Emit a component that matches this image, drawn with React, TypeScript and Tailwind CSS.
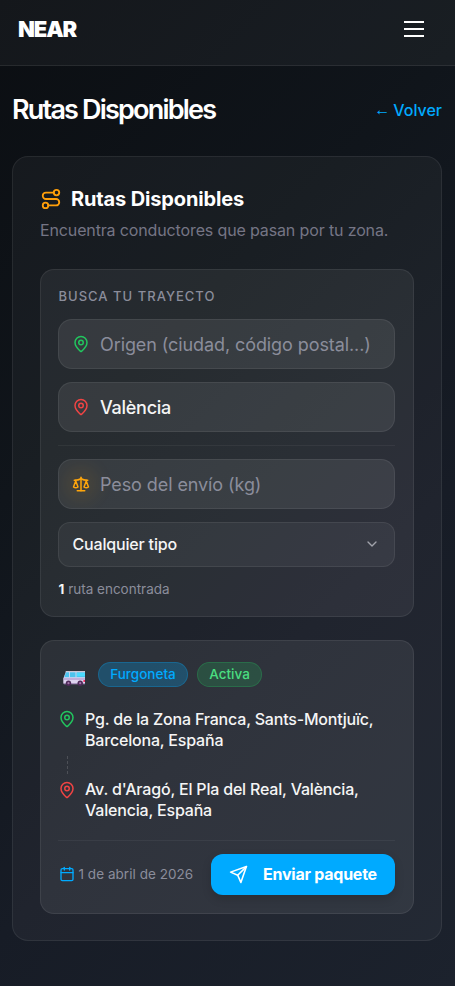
import React from 'react';
import { Calendar, ChevronDown, MapPin, Route, Scale } from 'lucide-react';

function SendIcon({ className }: { className?: string }) {
  return (
    <svg viewBox="0 0 24 24" fill="none" stroke="currentColor" strokeWidth="2" strokeLinecap="round" strokeLinejoin="round" className={className}>
      <path d="m22 2-7 20-4-9-9-4Z" />
      <path d="M22 2 11 13" />
    </svg>
  );
}

function VanIcon() {
  return (
    <svg viewBox="0 0 22 15" className="h-[15px] w-[22px]">
      <path d="M3 0.5h19v12.5H1.2L0.3 12V7.5z" fill="#ddd4ef" />
      <path d="M3.2 1h18.8v5.2H1.2z" fill="#4cc3ee" />
      <path d="M6 1h1v5.2H6zM12.5 1h1v5.2h-1z" fill="#c5d5ef" />
      <path d="M2.8 0.2H22v1.1H2.4z" fill="#e2dcee" />
      <path d="M14 2h8v3.2h-8z" fill="#49dcff" />
      <path d="M0.7 7.4H22v1H0.5z" fill="#a585c6" />
      <path d="M20.4 9H22v2h-1.6z" fill="#f02c62" />
      <path d="M0.3 12h21.7v1.2H1z" fill="#a992be" />
      <circle cx="5.5" cy="12.2" r="2.7" fill="#4e2a59" />
      <circle cx="17.2" cy="12.2" r="2.7" fill="#4e2a59" />
      <circle cx="5.5" cy="12.2" r="1.1" fill="#a477a9" />
      <circle cx="17.2" cy="12.2" r="1.1" fill="#a477a9" />
    </svg>
  );
}

interface FieldProps {
  icon: React.ReactNode;
  placeholder: string;
  value?: string;
}

function Field({ icon, placeholder, value }: FieldProps) {
  return (
    <label className="flex h-[50px] items-center gap-[10px] overflow-hidden rounded-[14px] border border-white/[0.07] bg-white/[0.08] px-[13px]">
      {icon}
      <input
        className="w-full min-w-0 bg-transparent text-[18px] font-medium tracking-[-0.014em] text-[#f5f5f5] outline-none placeholder:font-normal placeholder:tracking-[-0.005em] placeholder:text-[#8b8d9b]"
        placeholder={placeholder}
        defaultValue={value}
      />
    </label>
  );
}

function SearchPanel() {
  return (
    <div className="h-[348px] rounded-[14px] border border-white/[0.07] bg-white/[0.06] pt-[17px] pr-[18px] pl-[17px]">
      <h3 className="pl-[0.5px] text-[13px] leading-[18px] font-medium tracking-[0.078em] text-[#8b8d9b]">BUSCA TU TRAYECTO</h3>
      <div className="mt-[14px] flex flex-col gap-[13px]">
        <Field icon={<MapPin className="size-[18px] shrink-0 text-[#22c55e]" />} placeholder="Origen (ciudad, código postal...)" />
        <Field icon={<MapPin className="size-[18px] shrink-0 text-[#ef4444]" />} placeholder="Destino" value="València" />
        <div className="border-t border-white/[0.05]" />
        <Field
          icon={
            <span className="flex size-[18px] shrink-0 rounded-full bg-[#ffa60b]/5 shadow-[0_0_18px_8px_rgba(255,166,11,0.09)]">
              <Scale className="size-[18px] text-[#ffa60b]" />
            </span>
          }
          placeholder="Peso del envío (kg)"
        />
        <button className="flex h-[45px] items-center justify-between rounded-xl border border-white/[0.07] bg-white/[0.05] pr-[13px] pb-[1px] pl-[13.5px] text-left text-[16px] font-medium tracking-[-0.011em] text-[#f5f5f5]">
          Cualquier tipo
          <ChevronDown className="mr-[1px] size-4 text-[#a1a3ab]" />
        </button>
      </div>
      <p className="mt-[12px] pl-[0.5px] text-[13.5px] leading-[20px] text-[#8b8d9b]">
        <strong className="font-bold text-[#f5f5f5]">1</strong> ruta encontrada
      </p>
    </div>
  );
}

function RouteCard() {
  return (
    <div className="mt-[23px] h-[274px] rounded-[14px] border border-white/[0.07] bg-white/[0.07] pt-[21px] pr-[18px] pl-[17px]">
      <div className="flex items-center">
        <span className="mt-[7px] ml-[4.5px]">
          <VanIcon />
        </span>
        <span className="ml-[13.5px] flex h-[25px] w-[90px] items-center justify-center rounded-full border border-[#00aaff]/25 bg-[#00aaff]/25 text-[13.5px] font-medium text-[#00aaff]">
          Furgoneta
        </span>
        <span className="ml-[9px] flex h-[25px] w-[65px] items-center justify-center rounded-full border border-[#22c55e]/25 bg-[#22c55e]/20 text-[13.5px] font-medium text-[#4ade80]">
          Activa
        </span>
      </div>

      <div className="mt-[22px] flex gap-[9px] text-[16px] leading-[21px] font-medium tracking-[-0.012em] text-[#f5f5f5]">
        <MapPin className="mt-[1px] size-[18px] shrink-0 text-[#22c55e]" />
        <p>
          Pg. de la Zona Franca, Sants-Montjuïc,
          <br />
          Barcelona, España
        </p>
      </div>
      <div className="mt-[5px] ml-[9px] h-[18px] border-l border-dashed border-white/15" />
      <div className="mt-[5px] flex gap-[9px] text-[16px] leading-[21px] font-medium tracking-[-0.012em] text-[#f5f5f5]">
        <MapPin className="mt-[2px] size-[18px] shrink-0 text-[#ef4444]" />
        <p>
          Av. d'Aragó, El Pla del Real, València,
          <br />
          Valencia, España
        </p>
      </div>

      <div className="mt-[19px] flex items-center justify-between border-t border-white/[0.05] pt-[13px]">
        <span className="flex items-center gap-[4px] pb-[1px] pl-[0.5px] text-[13.5px] tracking-[0.003em] text-[#8b8d9b]">
          <Calendar className="size-4 text-[#00aaff]" />
          1 de abril de 2026
        </span>
        <button className="flex h-[41px] w-[184px] items-center gap-[15px] rounded-xl bg-[#00aaff] pb-[1px] pl-[18px] text-[16px] font-bold tracking-[-0.015em] text-white shadow-[0_4px_10px_rgba(0,0,0,0.15)]">
          <SendIcon className="size-[19px]" />
          Enviar paquete
        </button>
      </div>
    </div>
  );
}

export default function App() {
  return (
    <div className="h-[986px] overflow-hidden bg-[linear-gradient(135deg,#0b0e12_0%,#10151b_35%,#171c26_65%,#1c222d_100%)] font-['Inter',sans-serif] text-white">
      <header className="flex h-[66px] items-center justify-between border-b border-white/[0.08] bg-white/[0.04] pr-[31px] pb-[7px] pl-[18px]">
        <span className="text-[22px] font-black tracking-[-0.05em]">NEAR</span>
        <button aria-label="Menú" className="flex flex-col gap-[5px]">
          <span className="h-[2px] w-[20px] bg-white" />
          <span className="h-[2px] w-[20px] bg-white" />
          <span className="h-[2px] w-[20px] bg-white" />
        </button>
      </header>

      <main className="pr-[13px] pl-3">
        <div className="flex h-[90px] items-center justify-between pb-[1px]">
          <h1 className="text-[27px] font-semibold tracking-[-0.067em]">Rutas Disponibles</h1>
          <a href="#" className="flex items-center gap-[3px] pb-[2px] text-[16px] font-medium text-[#00aaff]">
            <span className="font-['Liberation_Sans',sans-serif] text-[16px] font-normal">←</span>
            Volver
          </a>
        </div>

        <section className="h-[785px] rounded-[16px] border border-white/[0.07] bg-white/[0.04] px-[27px] pt-[28px]">
          <h2 className="flex h-[28px] items-center gap-[9px] text-[20px] font-bold tracking-[-0.007em]">
            <Route className="size-[22px] text-[#ff9f0a]" />
            Rutas Disponibles
          </h2>
          <p className="mt-[5px] mb-[27px] text-[16px] leading-[24px] tracking-[-0.0085em] text-[#757585]">
            Encuentra conductores que pasan por tu zona.
          </p>
          <SearchPanel />
          <RouteCard />
        </section>
      </main>
    </div>
  );
}
